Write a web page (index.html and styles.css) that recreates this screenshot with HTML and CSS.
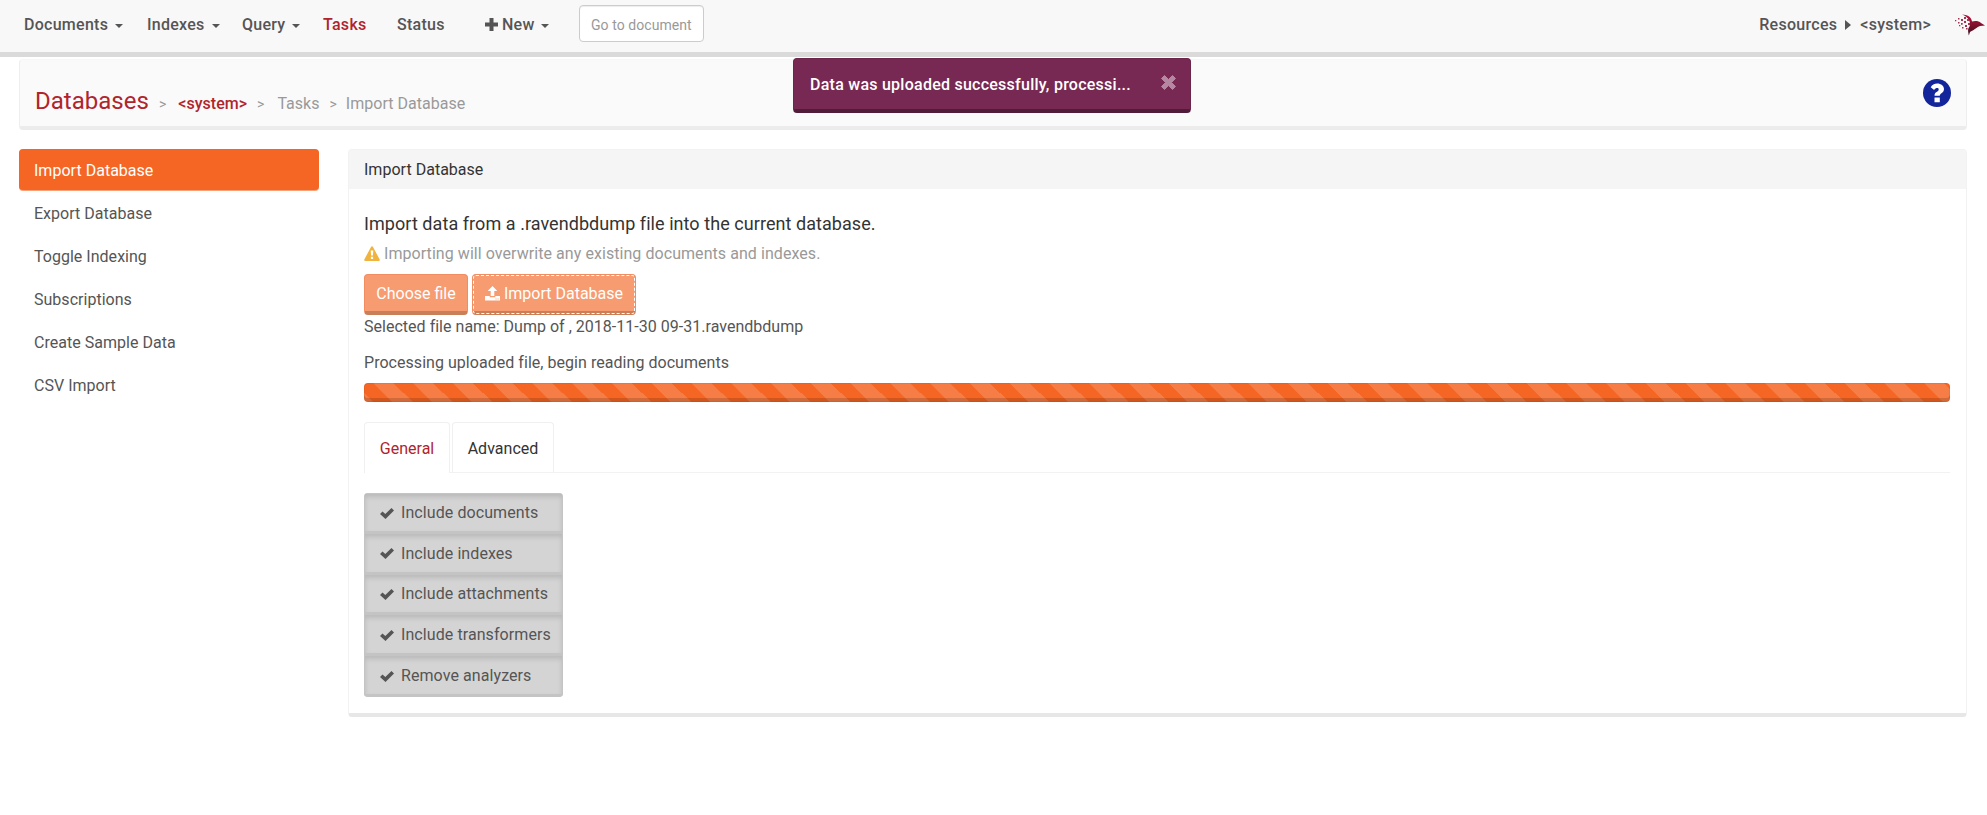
FILE: index.html
```html
<!DOCTYPE html>
<html lang="en">
<head>
<meta charset="utf-8">
<title>Import Database</title>
<link rel="stylesheet" href="styles.css">
</head>
<body>
<svg class="defs" width="0" height="0">
  <symbol id="check" viewBox="0 0 14 11"><path d="M0 6 2.500 3.500 5.300 6 11.500 0 14 2.500 5.500 11Z" fill="currentColor"/></symbol>
</svg>
<nav class="navbar">
  <a class="nav-item documents">Documents <i class="caret"></i></a>
  <a class="nav-item indexes">Indexes <i class="caret"></i></a>
  <a class="nav-item query">Query <i class="caret"></i></a>
  <a class="nav-item tasks active">Tasks</a>
  <a class="nav-item status">Status</a>
  <a class="nav-item new"><svg class="plus" viewBox="0 0 13 13"><path d="M4.500 0h4v4.500H13v4H8.500V13h-4V8.500H0v-4h4.500z" fill="currentColor"/></svg>New <i class="caret"></i></a>
  <input class="goto" placeholder="Go to document">
  <div class="nav-right">
    <span>Resources</span><i class="caret-right"></i><span class="resource">&lt;system&gt;</span>
    <svg class="logo" viewBox="0 0 31 22">
      <defs><linearGradient id="wing" x1="0" y1="0" x2="0" y2="1"><stop offset="0" stop-color="#b8123f"/><stop offset=".45" stop-color="#86102f"/><stop offset="1" stop-color="#35101c"/></linearGradient></defs>
      <path d="M8 .6C13 .8 17.500 3 18 7.600C21 6.500 25 7 27 9L31 11.500L26 12C23 13 21 15.500 16 18L14.800 21.400C14 17 13.500 15 15.500 12.500C17 8 14.500 3 8 .6Z" fill="url(#wing)"/>
      <g fill="#a63351"><path d="M10 3h2v2h-2zM13 5h2v2h-2zM7 5h2v2H7zM10 7h2v2h-2zM14 9h2v2h-2zM4 4h1.500v1.500H4zM1 6h1.300v1.300H1zM4 8h1.500v1.500H4zM7 9h1.700v1.700H7zM11 11h2v2h-2zM8 13h1.500v1.500H8zM5 11h1.300v1.300H5zM12 14h1.600v1.600H12z"/></g>
    </svg>
  </div>
</nav>
<header class="page-head">
  <div class="crumbs">
    <a class="root">Databases</a><span class="sep s1">&gt;</span><a class="sys">&lt;system&gt;</a><span class="sep s2">&gt;</span><span class="c-tasks">Tasks</span><span class="sep s3">&gt;</span><span class="c-import">Import Database</span>
  </div>
  <svg class="help" viewBox="0 0 28 28"><circle cx="14" cy="14" r="14" fill="#13259a"/><path d="M7.700 8.300C9.300 5.700 11.200 4.500 14.200 4.500C18 4.500 21 6.900 21 10.100C21 14.100 16.800 14.400 16.800 16.800H11.500C11.500 12.500 15.700 12.900 15.700 10.500C15.700 8.600 12.800 8.500 11.100 10.900ZM11.500 18.500h5.300v4.800h-5.300z" fill="#fff"/></svg>
</header>
<div class="toast"><span class="toast-text">Data was uploaded successfully, processi...</span><svg class="close" viewBox="0 0 15 15"><path d="M3.500.5 7.500 4.500l4-4 3 3-4 4 4 4-3 3-4-4-4 4-3-3 4-4-4-4z" fill="#b388a0" stroke="#b388a0" stroke-linejoin="round"/></svg></div>
<div class="main">
  <ul class="side">
    <li class="on">Import Database</li><li>Export Database</li><li>Toggle Indexing</li><li>Subscriptions</li><li>Create Sample Data</li><li>CSV Import</li>
  </ul>
  <section class="panel">
    <div class="panel-head"><span>Import Database</span></div>
    <div class="panel-body">
      <h4 class="lead"><span>Import data from a .ravendbdump file into the current database.</span></h4>
      <p class="warn"><svg class="warn-icon" viewBox="0 0 16 15"><path d="M8 .3Q8.600.3 9 1L15.700 13.500Q16 14.800 15 15H1Q0 14.800.3 13.500L7 1Q7.400.3 8 .3Z" fill="#f0b43e"/><path d="M6.700 4.500h2.600l-.4 5H7.100zM6.900 10.700h2.200v2.200H6.900z" fill="#fff"/></svg><span>Importing will overwrite any existing documents and indexes.</span></p>
      <div class="buttons">
        <button class="btn choose">Choose file</button>
        <button class="btn import"><svg class="upload" viewBox="0 0 15 15"><path d="M7.500 0 12.300 5H9.300v5H5.700V5h-3zM0 10h4.700v1.300h5.600V10H15v4.600H0z" fill="#fff"/><path d="M10.500 12.400h1v1h-1zM12.600 12.400h1v1h-1z" fill="#f79b70"/></svg><span>Import Database</span></button>
      </div>
      <p class="file"><span>Selected file name: Dump of , 2018-11-30 09-31.ravendbdump</span></p>
      <p class="process"><span>Processing uploaded file, begin reading documents</span></p>
      <div class="progress"></div>
      <div class="tabs"><div class="tab current">General</div><div class="tab adv">Advanced</div></div>
      <div class="options">
        <div class="opt"><svg class="check"><use href="#check"/></svg><span>Include documents</span></div>
        <div class="opt"><svg class="check"><use href="#check"/></svg><span>Include indexes</span></div>
        <div class="opt"><svg class="check"><use href="#check"/></svg><span>Include attachments</span></div>
        <div class="opt"><svg class="check"><use href="#check"/></svg><span>Include transformers</span></div>
        <div class="opt"><svg class="check"><use href="#check"/></svg><span>Remove analyzers</span></div>
      </div>
    </div>
  </section>
</div>
</body>
</html>
```
FILE: styles.css
```css
* { box-sizing: border-box; }
body { margin: 0; background: #fff; color: #555; font: 16px/22px Roboto, sans-serif; letter-spacing: .02px; height: 815px; overflow: hidden; }
p, h4, ul { margin: 0; padding: 0; }
.defs { position: absolute; }

.navbar { height: 57px; background: #f8f8f8; border-bottom: 5px solid #dadada; display: flex; align-items: flex-start; padding-left: 24px; font-weight: 500; letter-spacing: .27px; }
.nav-item { display: flex; align-items: center; height: 22px; margin-top: 13px; white-space: nowrap; }
.documents { width: 123px; }
.indexes { width: 95px; }
.query { width: 81px; }
.tasks { width: 74px; }
.status { width: 88px; }
.new { width: 94px; }
.new .caret { margin-left: 6px; }
.active { color: #b0242c; }
.caret { border: 4px solid transparent; border-top-color: #555; border-bottom: 0; margin-left: 7px; margin-top: 3px; }
.plus { width: 13px; height: 13px; margin-right: 4px; margin-top: -1px; }
.goto { width: 125px; height: 37px; margin-top: 5px; padding: 2px 11px 0; border: 1px solid #ccc; border-radius: 4px; background: #fff; box-shadow: inset 0 1px 1px rgba(0,0,0,.075); font: 14px Roboto, sans-serif; letter-spacing: .06px; }
.goto::placeholder { color: #999; opacity: 1; }
.nav-right { margin-left: auto; padding-right: 2px; display: flex; align-items: center; height: 22px; margin-top: 13px; }
.caret-right { border: 5px solid transparent; border-left: 6px solid #555; border-right: 0; margin: 0 9px 0 8px; }
.logo { width: 31px; height: 22px; margin-left: 23px; }

.nav-item, .nav-right { padding-top: 1px; }

.page-head { margin: 2px 20px 0 19px; height: 71px; background: #fafafa; border: 1px solid #eee; border-top-color: #f7f7f7; border-bottom: 4px solid #ececec; border-radius: 4px; display: flex; justify-content: space-between; padding: 0 15px; }
.crumbs { display: flex; align-items: baseline; padding-top: 25px; line-height: 32px; height: 60px; color: #999; }
.root { font-size: 24px; color: #b0242c; }
.sys { font-weight: 500; font-size: 16px; color: #b0242c; }
.sep { font-size: 14px; }
.s1 { margin: 0 12px 0 10px; }
.s2 { margin: 0 13px 0 10px; }
.s3 { margin: 0 9px 0 10px; }
.help { width: 28px; height: 28px; margin-top: 19px; }

.toast { position: absolute; left: 793px; top: 58px; width: 398px; height: 55px; background: #772953; border: 1px solid #6b244a; border-bottom: 4px solid #511c39; border-radius: 4px; color: #fff; font-weight: 500; letter-spacing: .25px; display: flex; justify-content: space-between; padding: 15px 14px 0 16px; white-space: nowrap; }
.close { width: 15px; height: 15px; margin-top: 1px; }

.main { display: flex; align-items: flex-start; gap: 29px; padding: 19px 20px 0 19px; }
.side { width: 300px; list-style: none; display: flex; flex-direction: column; gap: 2px; }
.side li { height: 41px; padding: 11px 15px 8px; }
.side .on { background: #f56624; color: #fff; border-radius: 4px; box-shadow: 0 1px 0 #f8a27a; }
.panel { flex: 1; height: 568px; border: 1px solid #f2f2f2; border-bottom: 4px solid #e7e7e7; border-radius: 4px; color: #555; }
.panel-head { height: 39px; padding: 9px 15px 8px; background: #f5f5f5; color: #333; }
.panel-body { padding: 0 16px 0 15px; display: flex; flex-direction: column; }
.lead { margin-top: 24px; font-size: 18px; font-weight: 400; line-height: 22px; letter-spacing: .06px; color: #333; }
.warn { color: #999; height: 22px; margin-top: 8px; letter-spacing: .06px; display: flex; align-items: center; gap: 4px; }
.warn-icon { width: 16px; height: 15px; margin-top: -1px; }
.buttons { display: flex; gap: 4px; margin-top: 9px; }
.btn { height: 41px; padding: 2px 0 0; border: 1px solid #f08e62; border-bottom: 4px solid #ca7f5b; border-radius: 4px; background: #f79b70; color: #fff; font: 16px/22px Roboto, sans-serif; display: flex; justify-content: center; align-items: center; }
.choose { width: 104px; }
.import { width: 164px; gap: 4px; outline: 1px dashed #fff; outline-offset: -2px; }
.upload { width: 15px; height: 15px; margin-top: -2px; }
.file { margin-top: 1px; }
.process { margin-top: 14px; letter-spacing: .04px; }
.progress { height: 19px; margin-top: 9px; border-radius: 4px; background-color: #f56624; background-image: linear-gradient(45deg, rgba(255,255,255,.15) 25%, transparent 25%, transparent 50%, rgba(255,255,255,.15) 50%, rgba(255,255,255,.15) 75%, transparent 75%); background-size: 39.780px 40px; background-position: 9.700px 0; box-shadow: inset 0 -4px 0 rgba(0,0,0,.15), inset 0 0 0 1px rgba(0,0,0,.05); }
.tabs { height: 51px; margin-top: 20px; display: flex; gap: 2px; border-bottom: 1px solid #f2f2f2; }
.tab { height: 50px; border: 1px solid #f0f0f0; border-bottom: 0; border-radius: 4px 4px 0 0; padding: 15px 0; text-align: center; color: #333; width: 102px; }
.tab.current { width: 86px; height: 51px; background: #fff; color: #b0242c; }
.options { width: 199px; margin-top: 20px; border-radius: 4px; overflow: hidden; }
.opt { height: 40.800px; display: flex; align-items: center; gap: 7px; padding: 2px 0 0 15px; background: #d4d4d4; border: 1px solid #c4c4c4; border-top-width: 0; border-bottom-width: 3px; box-shadow: inset 0 3px 5px rgba(0,0,0,.125); letter-spacing: .08px; white-space: nowrap; }
.opt:first-child { border-top-width: 1px; }
.check { width: 14px; height: 11px; flex: none; }
```
